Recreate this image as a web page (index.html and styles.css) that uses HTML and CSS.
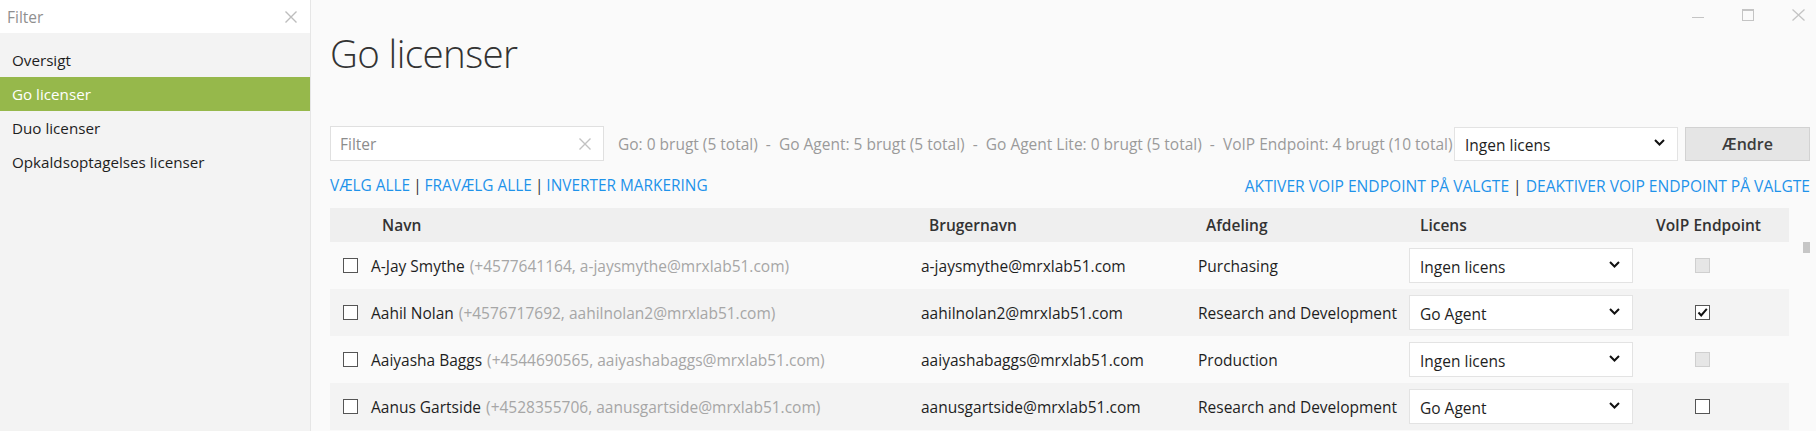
FILE: index.html
```html
<!DOCTYPE html>
<html lang="da">
<head>
<meta charset="utf-8">
<title>Go licenser</title>
<link rel="stylesheet" href="styles.css">
</head>
<body>
<div class="app">
  <aside class="sidebar">
    <div class="side-filter">
      <span class="placeholder">Filter</span>
      <svg class="clear-icon" width="12" height="12" viewBox="0 0 12 12"><path d="M0.5 0.5 L11.5 11.5 M11.5 0.5 L0.5 11.5" stroke="#bdbdbd" stroke-width="1.4" fill="none"/></svg>
    </div>
    <nav class="side-nav">
      <div class="nav-item">Oversigt</div>
      <div class="nav-item active">Go licenser</div>
      <div class="nav-item">Duo licenser</div>
      <div class="nav-item">Opkaldsoptagelses licenser</div>
    </nav>
  </aside>

  <main class="main">
    <div class="win-controls">
      <span class="wc wc-min"></span>
      <span class="wc wc-max"></span>
      <svg class="wc wc-close" width="13" height="12" viewBox="0 0 13 12"><path d="M0.5 0.5 L12.5 11.5 M12.5 0.5 L0.5 11.5" stroke="#c4c4c4" stroke-width="1.3" fill="none"/></svg>
    </div>

    <h1 class="title">Go licenser</h1>

    <div class="toolbar">
      <div class="filter-input">
        <span class="placeholder">Filter</span>
        <svg class="clear-icon" width="12" height="12" viewBox="0 0 12 12"><path d="M0.5 0.5 L11.5 11.5 M11.5 0.5 L0.5 11.5" stroke="#c2c2c2" stroke-width="1.4" fill="none"/></svg>
      </div>
      <div class="stats">Go: 0 brugt (5 total)&nbsp; - &nbsp;Go Agent: 5 brugt (5 total)&nbsp; - &nbsp;Go Agent Lite: 0 brugt (5 total)&nbsp; - &nbsp;VoIP Endpoint: 4 brugt (10 total)</div>
      <div class="select select-top">
        <span>Ingen licens</span>
        <svg class="chev" width="11" height="7" viewBox="0 0 11 7"><path d="M1 1 L5.5 5.5 L10 1" stroke="#111" stroke-width="2" fill="none"/></svg>
      </div>
      <button class="btn">Ændre</button>
    </div>

    <div class="links">
      <div class="link-group">
        <a class="link">VÆLG ALLE</a><span class="sep">|</span><a class="link">FRAVÆLG ALLE</a><span class="sep">|</span><a class="link">INVERTER MARKERING</a>
      </div>
      <div class="link-group link-group-right">
        <a class="link">AKTIVER VOIP ENDPOINT PÅ VALGTE</a><span class="sep">|</span><a class="link">DEAKTIVER VOIP ENDPOINT PÅ VALGTE</a>
      </div>
    </div>

    <div class="table-area">
      <div class="table">
        <div class="row head">
          <div class="cell c-name"><span class="h-name">Navn</span></div>
          <div class="cell c-user"><span class="h-txt">Brugernavn</span></div>
          <div class="cell c-dept"><span class="h-txt">Afdeling</span></div>
          <div class="cell c-lic"><span class="h-txt">Licens</span></div>
          <div class="cell c-voip"><span class="h-voip">VoIP Endpoint</span></div>
        </div>

        <div class="row">
          <div class="cell c-name"><span class="cb"></span><span class="nm">A-Jay Smythe</span><span class="sub">(+4577641164, a-jaysmythe@mrxlab51.com)</span></div>
          <div class="cell c-user">a-jaysmythe@mrxlab51.com</div>
          <div class="cell c-dept">Purchasing</div>
          <div class="cell c-lic"><div class="select"><span>Ingen licens</span><svg class="chev" width="11" height="7" viewBox="0 0 11 7"><path d="M1 1 L5.5 5.5 L10 1" stroke="#111" stroke-width="2" fill="none"/></svg></div></div>
          <div class="cell c-voip"><span class="cb disabled"></span></div>
        </div>

        <div class="row alt">
          <div class="cell c-name"><span class="cb"></span><span class="nm">Aahil Nolan</span><span class="sub">(+4576717692, aahilnolan2@mrxlab51.com)</span></div>
          <div class="cell c-user">aahilnolan2@mrxlab51.com</div>
          <div class="cell c-dept">Research and Development</div>
          <div class="cell c-lic"><div class="select"><span>Go Agent</span><svg class="chev" width="11" height="7" viewBox="0 0 11 7"><path d="M1 1 L5.5 5.5 L10 1" stroke="#111" stroke-width="2" fill="none"/></svg></div></div>
          <div class="cell c-voip"><span class="cb checked"><svg width="13" height="13" viewBox="0 0 13 13"><path d="M2.5 6.5 L5.2 9.5 L10.8 2.8" stroke="#111" stroke-width="2" fill="none"/></svg></span></div>
        </div>

        <div class="row">
          <div class="cell c-name"><span class="cb"></span><span class="nm">Aaiyasha Baggs</span><span class="sub">(+4544690565, aaiyashabaggs@mrxlab51.com)</span></div>
          <div class="cell c-user">aaiyashabaggs@mrxlab51.com</div>
          <div class="cell c-dept">Production</div>
          <div class="cell c-lic"><div class="select"><span>Ingen licens</span><svg class="chev" width="11" height="7" viewBox="0 0 11 7"><path d="M1 1 L5.5 5.5 L10 1" stroke="#111" stroke-width="2" fill="none"/></svg></div></div>
          <div class="cell c-voip"><span class="cb disabled"></span></div>
        </div>

        <div class="row alt">
          <div class="cell c-name"><span class="cb"></span><span class="nm">Aanus Gartside</span><span class="sub">(+4528355706, aanusgartside@mrxlab51.com)</span></div>
          <div class="cell c-user">aanusgartside@mrxlab51.com</div>
          <div class="cell c-dept">Research and Development</div>
          <div class="cell c-lic"><div class="select"><span>Go Agent</span><svg class="chev" width="11" height="7" viewBox="0 0 11 7"><path d="M1 1 L5.5 5.5 L10 1" stroke="#111" stroke-width="2" fill="none"/></svg></div></div>
          <div class="cell c-voip"><span class="cb"></span></div>
        </div>
      </div>
      <div class="scrollbar"><div class="thumb"></div></div>
    </div>
  </main>
</div>
</body>
</html>
```

FILE: styles.css
```css
* { box-sizing: border-box; }
html, body { margin: 0; padding: 0; }
body {
  font-family: "Open Sans", "Noto Sans", sans-serif;
  font-size: 15.5px;
  color: #222;
  background: #fafafa;
  overflow: hidden;
}
.app {
  display: flex;
  width: 1816px;
  height: 431px;
}

/* Sidebar */
.sidebar {
  width: 311px;
  flex: 0 0 311px;
  background: #f3f3f3;
  border-right: 1px solid #e6e6e6;
}
.side-filter {
  height: 33px;
  background: #fff;
  display: flex;
  align-items: center;
  justify-content: space-between;
  padding: 0 13px 0 7px;
}
.side-filter .placeholder {
  color: #8f8f8f;
  font-size: 15.5px;
}
.side-nav { padding-top: 10px; }
.nav-item {
  height: 34px;
  line-height: 34px;
  padding-left: 12px;
  font-size: 15.2px;
  color: #1e1e1e;
}
.nav-item.active {
  background: #96b84b;
  color: #fff;
}

/* Main */
.main {
  flex: 1;
  position: relative;
  padding: 0 6px 0 19px;
  background: #fafafa;
}
.win-controls {
  position: absolute;
  top: 9px;
  right: 11px;
  display: flex;
  align-items: flex-start;
  gap: 38px;
}
.wc { display: block; }
.wc-min {
  width: 12px;
  height: 1px;
  margin-top: 8px;
  background: #c4c4c4;
}
.wc-max {
  width: 12px;
  height: 12px;
  border: 1px solid #c4c4c4;
  border-top-width: 2px;
}

.title {
  margin: 29px 0 0 0;
  font-size: 38.5px;
  line-height: 48px;
  font-weight: 300;
  letter-spacing: -0.6px;
  color: #333;
}

.toolbar {
  display: flex;
  align-items: center;
  margin-top: 49px;
  height: 35px;
}
.filter-input {
  width: 274px;
  height: 35px;
  background: #fff;
  border: 1px solid #e0e0e0;
  display: flex;
  align-items: center;
  justify-content: space-between;
  padding: 0 12px 0 9px;
}
.filter-input .placeholder { color: #8c8c8c; font-size: 15.5px; }
.stats {
  flex: 1;
  margin-left: 14px;
  color: #9a9a9a;
  font-size: 15.5px;
  white-space: nowrap;
}
.select {
  width: 224px;
  height: 35px;
  background: #fff;
  border: 1px solid #e3e3e3;
  display: flex;
  align-items: center;
  justify-content: space-between;
  padding: 2px 12px 0 10px;
  font-size: 15.5px;
  color: #1e1e1e;
}
.select .chev { margin-top: -4px; }
.select-top { height: 34px; }
.btn {
  margin-left: 7px;
  width: 125px;
  height: 34px;
  background: #e5e5e5;
  border: 1px solid #d2d2d2;
  font-family: inherit;
  font-size: 16px;
  font-weight: 600;
  color: #3c3c3c;
  padding: 0;
}

.links {
  display: flex;
  justify-content: space-between;
  margin-top: 15px;
  line-height: 20px;
  font-size: 15.4px;
}
.link-group-right { font-size: 15.6px; }
.link { color: #1f93ea; }
.sep { color: #333; margin: 0 3px; }
.link-group-right .sep { margin: 0 4px; }

/* Table */
.table-area {
  display: flex;
  margin-top: 12px;
}
.table { width: 1459px; }
.row {
  display: grid;
  grid-template-columns: 583px 277px 211px 240px 148px;
  height: 47px;
  background: #fafafa;
}
.row.alt { background: #f3f3f3; }
.row.head {
  height: 34px;
  background: #efefef;
  font-weight: 600;
  color: #333;
}
.cell {
  display: flex;
  align-items: center;
  padding-left: 8px;
  white-space: nowrap;
  color: #1e1e1e;
}
.head .cell { padding-left: 16px; color: #333; }
.head .c-name { padding-left: 52px; }
.head .c-lic { padding-left: 19px; }
.head .c-voip { padding-left: 15px; }
.c-name { padding-left: 13px; }
.c-voip { padding-left: 54px; }
.nm { margin-left: 13px; color: #1e1e1e; }
.sub { margin-left: 5px; color: #a6a6a6; }

.cb {
  width: 15px;
  height: 15px;
  flex: 0 0 15px;
  border: 1px solid #555;
  background: #fff;
  display: flex;
  align-items: center;
  justify-content: center;
}
.cb.disabled {
  border-color: #cfcfcf;
  background: #e6e6e6;
}
.cb.checked svg { display: block; }

.scrollbar {
  flex: 1;
  position: relative;
  margin-top: 34px;
}
.thumb {
  margin-left: 14px;
  width: 7px;
  height: 11px;
  background: #c6c6c6;
}
```
